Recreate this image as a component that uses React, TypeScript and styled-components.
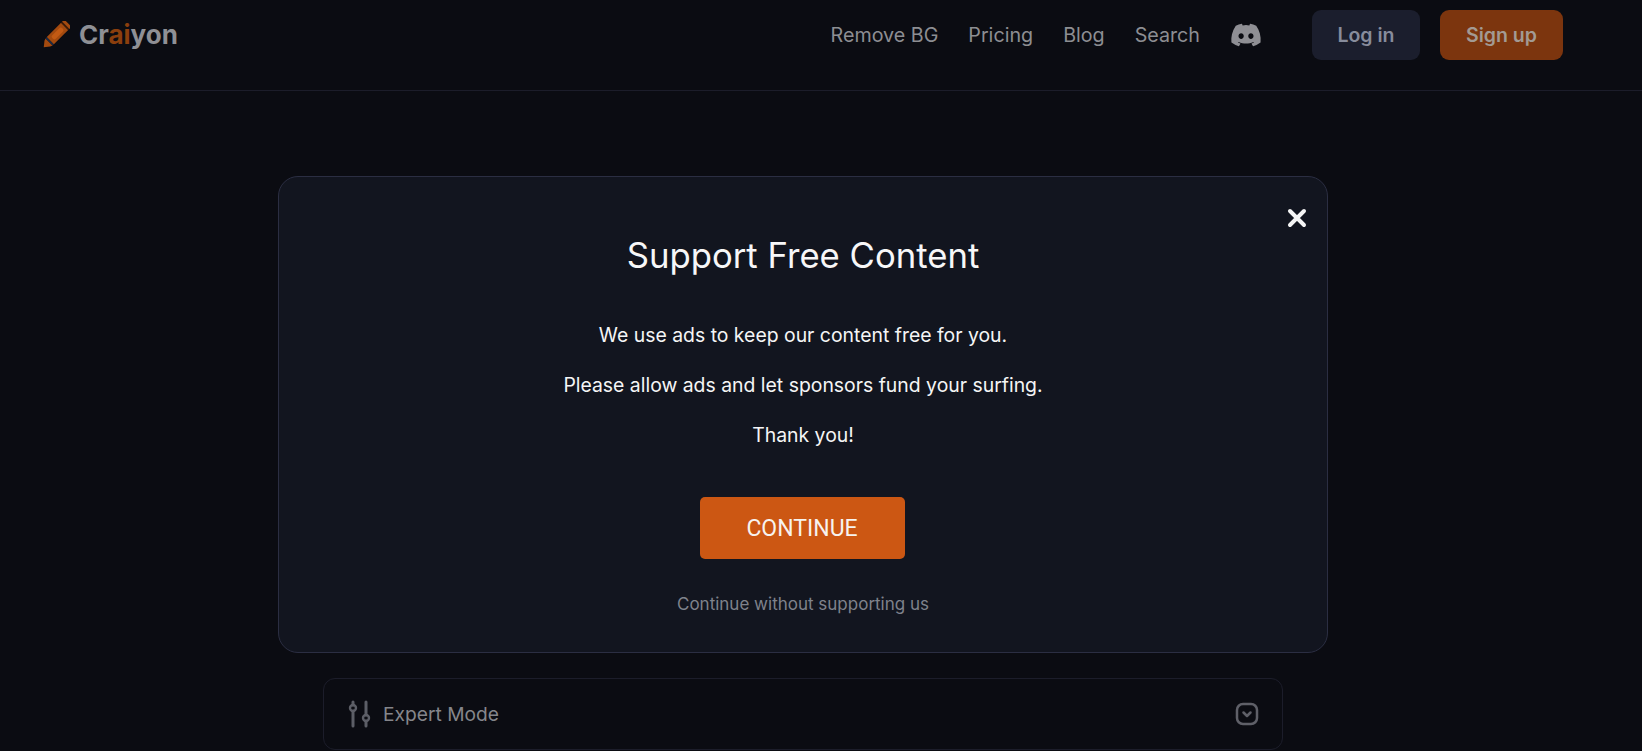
import React, {FC} from 'react';
import styled, {createGlobalStyle} from 'styled-components';
import {FaDiscord} from 'react-icons/fa';

const GlobalStyle = createGlobalStyle`
  html, body {
    margin: 0;
    height: 100%;
    overflow: hidden;
    background: #0b0c12;
  }
  * {
    box-sizing: border-box;
  }
`;

const Page = styled.div`
  height: 751px;
  overflow: hidden;
  font-family: Inter, "Liberation Sans", sans-serif;
`;

const Header = styled.header`
  height: 91px;
  padding: 9px 79px 0 43px;
  display: flex;
  align-items: flex-start;
  justify-content: space-between;
  border-bottom: 1px solid #1c1d2a;
`;

const Logo = styled.div`
  display: flex;
  align-items: center;
  gap: 9px;
  height: 50px;
`;

const LogoText = styled.span`
  font-size: 26px;
  font-weight: 700;
  color: #8f9095;
`;

const LogoAccent = styled.span`
  color: #8c3f0d;
`;

const Nav = styled.nav`
  display: flex;
  align-items: center;
  height: 50px;
  margin-top: 1px;
`;

const NavLink = styled.a`
  font-size: 19.7px;
  color: #8d8e92;
  margin-right: 30px;
`;

const DiscordLink = styled.a`
  display: flex;
  color: #8f8f94;
  font-size: 32px;
  margin-right: 50px;
`;

const AuthButton = styled.button<{$primary?: boolean}>`
  width: ${p => (p.$primary ? 123 : 108)}px;
  height: 50px;
  margin-left: ${p => (p.$primary ? 20 : 0)}px;
  border: 0;
  border-radius: 9px;
  font-family: inherit;
  font-size: 19.5px;
  font-weight: 600;
  background: ${p => (p.$primary ? '#7c350e' : '#1b1e2d')};
  color: ${p => (p.$primary ? '#a39a93' : '#878c9c')};
`;

const Main = styled.main`
  display: flex;
  flex-direction: column;
  align-items: center;
  padding: 85px 36px 0 0;
`;

const Modal = styled.section`
  position: relative;
  width: 1050px;
  height: 477px;
  padding-top: 56px;
  display: flex;
  flex-direction: column;
  align-items: center;
  background: #12151f;
  border: 1px solid #2b2e42;
  border-radius: 20px;
`;

const CloseButton = styled.button`
  position: absolute;
  top: 29px;
  right: 18px;
  width: 24px;
  height: 24px;
  padding: 0;
  display: flex;
  background: none;
  border: 0;
  color: #f5f5f5;
`;

const Title = styled.h2`
  margin: 0 0 47px;
  font-size: 34.7px;
  line-height: 44px;
  font-weight: 400;
  color: #f7f7f8;
`;

const Paragraph = styled.p`
  margin: 0 0 28px;
  font-size: 19.4px;
  line-height: 22px;
  color: #f5f5f6;
`;

const ContinueButton = styled.button`
  width: 205px;
  height: 62px;
  margin: 23px 2px 0 0;
  border: 0;
  border-radius: 5px;
  background: #cc5713;
  color: #f7f3ef;
  font-family: Roboto, sans-serif;
  font-size: 23px;
`;

const SkipLink = styled.a`
  margin-top: 35px;
  font-size: 17px;
  line-height: 20px;
  color: #7f828c;
`;

const ExpertCard = styled.div`
  width: 960px;
  height: 72px;
  margin-top: 25px;
  padding: 0 23px 0 24px;
  display: flex;
  align-items: center;
  border: 1px solid #1c1d2a;
  border-radius: 12px;
`;

const ExpertLabel = styled.span`
  flex: 1;
  margin-left: 11px;
  font-size: 19.2px;
  color: #85868b;
`;

const Crayon: FC = () => (
  <svg width="27" height="27" viewBox="0 0 27 27">
    <g transform="rotate(-135 13.5 13.5)">
      <path d="M13.5 -4.5 L9.5 0.5 L8.5 3 H18.5 L17.5 0.5 Z" fill="#a34a0f" />
      <rect x="8.5" y="3" width="10" height="1.8" fill="#1d2a44" />
      <rect x="8.5" y="4.8" width="10" height="20.2" fill="#a34a0f" />
      <rect x="11" y="8" width="5" height="14" rx="2" fill="#c25a14" />
      <rect x="8.5" y="25" width="10" height="1.6" fill="#3d1c08" />
      <rect x="8" y="26.6" width="11" height="3" rx="1" fill="#a34a0f" />
    </g>
  </svg>
);

const SlidersIcon: FC = () => (
  <svg width="24" height="28" viewBox="0 0 24 28" fill="none" stroke="#5c5e66" strokeWidth="3" strokeLinecap="round">
    <line x1="5" y1="2" x2="5" y2="5" />
    <circle cx="5" cy="8" r="3" strokeWidth="2.4" />
    <line x1="5" y1="11" x2="5" y2="26" />
    <line x1="18" y1="2" x2="18" y2="15" />
    <circle cx="18" cy="18" r="3" strokeWidth="2.4" />
    <line x1="18" y1="21" x2="18" y2="26" />
  </svg>
);

const ChevronBox: FC = () => (
  <svg width="24" height="24" viewBox="0 0 24 24" fill="none" stroke="#5f6068" strokeWidth="2.5" strokeLinecap="round" strokeLinejoin="round">
    <rect x="2" y="2" width="20" height="20" rx="6" />
    <path d="M8.5 10.5 L12 14 L15.5 10.5" />
  </svg>
);

const App: FC = () => {
  return <>
    <GlobalStyle />
    <Page>
      <Header>
        <Logo>
          <Crayon />
          <LogoText>Cr<LogoAccent>ai</LogoAccent>yon</LogoText>
        </Logo>
        <Nav>
          <NavLink>Remove BG</NavLink>
          <NavLink>Pricing</NavLink>
          <NavLink>Blog</NavLink>
          <NavLink>Search</NavLink>
          <DiscordLink><FaDiscord /></DiscordLink>
          <AuthButton>Log in</AuthButton>
          <AuthButton $primary>Sign up</AuthButton>
        </Nav>
      </Header>
      <Main>
        <Modal>
          <CloseButton aria-label="Close">
            <svg width="24" height="24" viewBox="0 0 24 24" fill="none" stroke="currentColor" strokeWidth="4" strokeLinecap="round">
              <path d="M5 5 L19 19 M19 5 L5 19" />
            </svg>
          </CloseButton>
          <Title>Support Free Content</Title>
          <Paragraph>We use ads to keep our content free for you.</Paragraph>
          <Paragraph>Please allow ads and let sponsors fund your surfing.</Paragraph>
          <Paragraph>Thank you!</Paragraph>
          <ContinueButton>CONTINUE</ContinueButton>
          <SkipLink>Continue without supporting us</SkipLink>
        </Modal>
        <ExpertCard>
          <SlidersIcon />
          <ExpertLabel>Expert Mode</ExpertLabel>
          <ChevronBox />
        </ExpertCard>
      </Main>
    </Page>
  </>;
};

export default App;
